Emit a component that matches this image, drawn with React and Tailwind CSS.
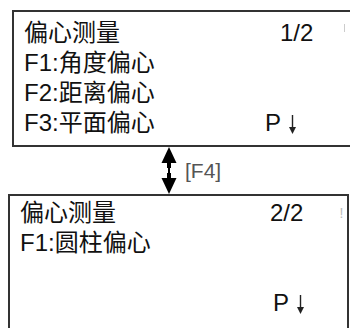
const font = { fontFamily: '"Liberation Sans", "Noto Sans CJK SC", sans-serif' };

function Row({ left, right, rightClass = "" }) {
    return (
        <div className="flex h-[30px] items-center">
            <span className="w-[241px] whitespace-nowrap">{left}</span>
            <span className={"whitespace-nowrap " + rightClass}>{right}</span>
        </div>
    );
}

function Down() {
    return (
        <span className="inline-flex items-center gap-[7px]">
            P
            <svg width="9" height="19" viewBox="0 0 9 19" className="mt-[2px]">
                <line x1="4.5" y1="0" x2="4.5" y2="14" stroke="#222" strokeWidth="1.4" />
                <path d="M1 12 L4.5 19 L8 12 Z" fill="#222" />
            </svg>
        </span>
    );
}

export default function App() {
    return (
        <div className="relative h-[328px] w-[350px] overflow-hidden bg-white text-[24px] text-[#111]" style={font}>
            <div className="ml-[12px] mt-[10px] h-[137px] border-l-2 border-t-2 border-b-2 border-[#333] pl-[10px] pt-[6px]">
                <Row left="偏心测量" right="1/2" rightClass="ml-[15px]" />
                <Row left="F1:角度偏心" />
                <Row left="F2:距离偏心" />
                <Row left="F3:平面偏心" right={<Down />} />
                <span className="absolute left-[344px] top-[24px] h-[8px] w-px bg-[#ccc]" />
            </div>

            <div className="flex h-[47px] items-center">
                <svg width="16" height="47" viewBox="0 0 16 47" className="ml-[161px]">
                    <path d="M8 0 L15.5 16 L10 16 L10 21 L6 21 L6 16 L0.5 16 Z" fill="#000" />
                    <path d="M8 47 L15.5 31 L10 31 L10 26 L6 26 L6 31 L0.5 31 Z" fill="#000" />
                    <rect x="7" y="20" width="2" height="7" fill="#000" />
                </svg>
                <span className="ml-[8px] text-[21px] text-[#555]">[F4]</span>
            </div>

            <div className="relative ml-[8px] mr-[1px] h-[140px] border-l-2 border-r-2 border-t-2 border-[#333] pl-[10px] pt-[2px]">
                <div className="flex h-[30px] items-center">
                    <span className="w-[250px]">偏心测量</span>
                    <span>2/2</span>
                    <span className="ml-[36px] text-[14px] text-[#bbb]">!</span>
                </div>
                <Row left="F1:圆柱偏心" />
                <Row left="" />
                <div className="flex h-[30px] items-center">
                    <span className="w-[253px]" />
                    <Down />
                </div>
            </div>
        </div>
    );
}
